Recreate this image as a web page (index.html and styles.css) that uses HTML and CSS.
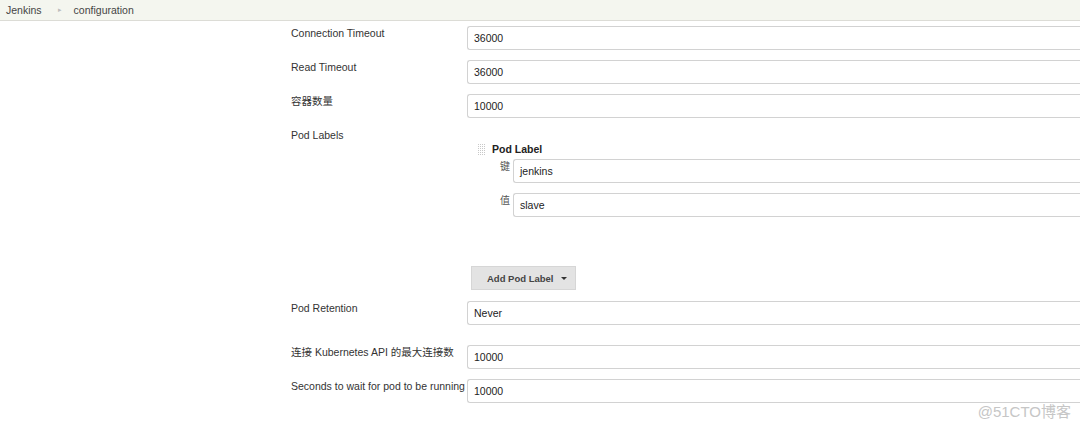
FILE: index.html
```html
<!DOCTYPE html>
<html>
<head>
<meta charset="utf-8">
<link rel="stylesheet" href="styles.css">
</head>
<body>
<div class="topbar">
  <span class="crumb">Jenkins</span>
  <span class="sep">&#9656;</span>
  <span class="crumb">configuration</span>
</div>
<div class="form">
  <div class="row">
    <div class="label">Connection Timeout</div>
    <div class="field"><div class="input">36000</div></div>
  </div>
  <div class="row">
    <div class="label">Read Timeout</div>
    <div class="field"><div class="input">36000</div></div>
  </div>
  <div class="row">
    <div class="label">容器数量</div>
    <div class="field"><div class="input">10000</div></div>
  </div>
  <div class="row">
    <div class="label">Pod Labels</div>
    <div class="field">
      <div class="chunk">
        <div class="chunk-head"><span class="handle"></span><span class="chunk-title">Pod Label</span></div>
        <div class="kv"><span class="kv-label">键</span><div class="input">jenkins</div></div>
        <div class="kv"><span class="kv-label">值</span><div class="input">slave</div></div>
      </div>
      <div class="btn"><span>Add Pod Label</span><span class="caret"></span></div>
    </div>
  </div>
  <div class="row retention">
    <div class="label">Pod Retention</div>
    <div class="field"><div class="input">Never</div></div>
  </div>
  <div class="row">
    <div class="label">连接 Kubernetes API 的最大连接数</div>
    <div class="field"><div class="input">10000</div></div>
  </div>
  <div class="row">
    <div class="label">Seconds to wait for pod to be running</div>
    <div class="field"><div class="input">10000</div></div>
  </div>
</div>
<div class="watermark">@51CTO博客</div>
</body>
</html>
```

FILE: styles.css
```css
html, body {
  margin: 0;
  padding: 0;
  background: #fff;
  overflow: hidden;
  width: 1080px;
  height: 429px;
}
body {
  font-family: "Liberation Sans", "Noto Sans CJK SC", Arial, sans-serif;
  font-size: 10.5px;
  color: #333;
  position: relative;
}
.topbar {
  height: 20px;
  background: #f4f6ef;
  border-bottom: 1px solid #dcdcd6;
  display: flex;
  align-items: center;
  padding-left: 6px;
  color: #444;
}
.sep {
  font-size: 7px;
  color: #bdbdbd;
  margin: 0 12px 0 16px;
}
.form {
  padding-left: 291px;
  padding-top: 5px;
  display: flex;
  flex-direction: column;
  gap: 10px;
  width: 789px;
}
.row {
  display: flex;
  align-items: flex-start;
}
.label {
  width: 176px;
  flex: none;
  padding-top: 1px;
  line-height: 13px;
  color: #333;
  white-space: nowrap;
}
.field {
  flex: 1;
  min-width: 0;
}
.input {
  height: 22px;
  border: 1px solid #d2d2d2;
  border-right: none;
  border-radius: 3px 0 0 3px;
  display: flex;
  align-items: center;
  padding-left: 6px;
  color: #222;
}
.chunk {
  padding: 14px 0 0 11px;
}
.chunk-head {
  display: flex;
  align-items: center;
  height: 14px;
}
.handle {
  width: 7px;
  height: 13px;
  background:
    repeating-linear-gradient(0deg, #fff 0 1px, transparent 1px 2px),
    repeating-linear-gradient(90deg, #c8c8c8 0 1px, #fff 1px 2px);
  margin-right: 7px;
}
.chunk-title {
  font-weight: bold;
  color: #222;
}
.kv {
  display: flex;
  align-items: flex-start;
  margin-top: 3px;
  padding-left: 22px;
}
.kv + .kv {
  margin-top: 10px;
}
.kv-label {
  width: 13px;
  flex: none;
  padding-top: 1px;
  font-size: 10px;
  line-height: 13px;
  color: #555;
}
.kv .input {
  flex: 1;
}
.btn {
  margin: 49px 0 0 4px;
  width: 80px;
  height: 22px;
  background: #e3e3e3;
  border: 1px solid #d6d6d6;
  display: flex;
  align-items: center;
  justify-content: space-between;
  padding: 0 8px 0 15px;
  font-weight: bold;
  font-size: 9.5px;
  color: #444;
}
.caret {
  width: 0;
  height: 0;
  border-left: 3px solid transparent;
  border-right: 3px solid transparent;
  border-top: 3px solid #333;
}
.retention {
  margin-top: 1px;
  margin-bottom: 10px;
}
.watermark {
  position: absolute;
  right: 9px;
  top: 400px;
  font-size: 15px;
  color: #c6c6c6;
  font-family: "Liberation Sans", "Noto Sans CJK SC", sans-serif;
}
```
